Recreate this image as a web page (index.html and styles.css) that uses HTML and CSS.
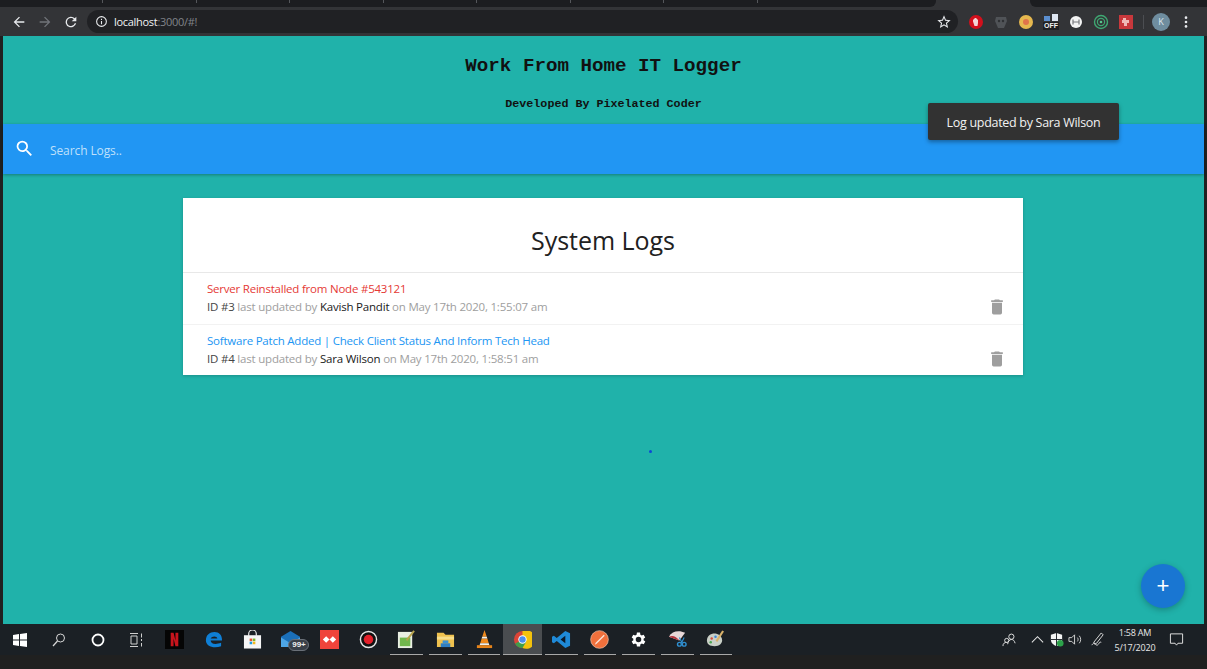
FILE: index.html
```html
<!DOCTYPE html>
<html lang="en">
<head>
<meta charset="utf-8">
<title>Work From Home IT Logger</title>
<link rel="stylesheet" href="styles.css">
</head>
<body>
<div class="browser">
  <div class="tabstrip">
    <div class="tabs-left"><span class="tab-sep"></span><span class="tab-sep"></span><span class="tab-sep"></span><span class="tab-sep"></span><span class="tab-sep"></span><span class="tab-sep"></span><span class="tab-sep"></span><span class="tab-sep"></span></div>
    <div class="tabs-right"></div>
  </div>
  <div class="toolbar">
    <svg class="nav-ic" viewBox="0 0 24 24"><path fill="#e8eaed" d="M20 11H7.800l5.600-5.600L12 4l-8 8 8 8 1.400-1.400L7.800 13H20z"/></svg>
    <svg class="nav-ic" viewBox="0 0 24 24"><path fill="#71747a" d="M4 11h12.200l-5.600-5.600L12 4l8 8-8 8-1.400-1.400 5.600-5.600H4z"/></svg>
    <svg class="nav-ic" viewBox="0 0 24 24"><path fill="#e8eaed" d="M17.650 6.350A8 8 0 1 0 19.730 14h-2.080A6 6 0 1 1 12 6c1.660 0 3.140.69 4.220 1.780L13 11h7V4z"/></svg>
    <div class="omnibox">
      <svg class="info-ic" viewBox="0 0 24 24"><path fill="#e8eaed" d="M11 7h2v2h-2zm0 4h2v6h-2zm1-9a10 10 0 1 0 0 20 10 10 0 0 0 0-20zm0 18a8 8 0 1 1 0-16 8 8 0 0 1 0 16z"/></svg>
      <span class="host">localhost</span><span class="path">:3000/#!</span>
      <svg class="star-ic" viewBox="0 0 24 24"><path fill="#e8eaed" d="M22 9.240l-7.190-.62L12 2 9.190 8.630 2 9.240l5.460 4.730L5.820 21 12 17.270 18.180 21l-1.630-7.030zM12 15.400l-3.760 2.270 1-4.280-3.320-2.880 4.380-.38L12 6.100l1.710 4.040 4.380.38-3.320 2.880 1 4.280z"/></svg>
    </div>
    <div class="exts">
      <svg class="ext" viewBox="0 0 16 16"><circle cx="8" cy="8" r="7" fill="#d3101c"/><path d="M5 7.500V5.500h1V4.500h1v-.5h1v.5h1v1h1v3.500L9.500 12h-3z" fill="#f3d5d5"/></svg>
      <svg class="ext" viewBox="0 0 16 16"><path d="M3 3h10l1 4-3 7H5L2 7z" fill="#505357"/><circle cx="6" cy="7" r="1.200" fill="#2f3134"/><circle cx="10" cy="7" r="1.200" fill="#2f3134"/></svg>
      <svg class="ext" viewBox="0 0 16 16"><circle cx="8" cy="8" r="7" fill="#e6b84f"/><circle cx="8" cy="8" r="3" fill="#e0734a"/></svg>
      <div class="ext-off">
        <svg class="ext-off-ic" viewBox="0 0 16 8"><rect x="1" y="2" width="6" height="5" fill="#5b8fd0"/><rect x="9" y="0" width="6" height="7" fill="#dfe7f2"/></svg>
        <span class="ext-off-label">OFF</span>
      </div>
      <svg class="ext" viewBox="0 0 16 16"><circle cx="8" cy="8" r="6" fill="#f4f4f4"/><path d="M5 5.500v5M11 5.500v5M5 8h6" stroke="#77797d" stroke-width="1.200"/></svg>
      <svg class="ext" viewBox="0 0 16 16"><circle cx="8" cy="8" r="6.500" fill="none" stroke="#3fa772" stroke-width="1.400"/><circle cx="8" cy="8" r="3.600" fill="none" stroke="#3fa772" stroke-width="1.200"/><circle cx="8" cy="8" r="1.300" fill="#57c78d"/></svg>
      <svg class="ext" viewBox="0 0 16 16"><rect x="1" y="1" width="14" height="14" fill="#c8383c"/><path d="M5 4h3v2h3v3H9v3H6V9H4V6h1z" fill="#efb9b6"/></svg>
      <span class="ext-sep"></span>
      <span class="avatar">K</span>
      <svg class="menu-ic" viewBox="0 0 4 16"><circle cx="2" cy="3" r="1.500" fill="#e8eaed"/><circle cx="2" cy="8" r="1.500" fill="#e8eaed"/><circle cx="2" cy="13" r="1.500" fill="#e8eaed"/></svg>
    </div>
  </div>

  <main class="page">
    <header class="app-head">
      <h1 class="app-title">Work From Home IT Logger</h1>
      <p class="app-sub">Developed By Pixelated Coder</p>
    </header>
    <nav class="searchbar">
      <svg class="search-ic" viewBox="0 0 24 24"><path fill="#fff" d="M15.500 14h-.79l-.28-.27A6.470 6.470 0 0 0 16 9.500 6.500 6.500 0 1 0 9.500 16c1.610 0 3.090-.59 4.230-1.570l.27.28v.79l5 4.990L20.490 19zm-6 0C7.010 14 5 11.990 5 9.500S7.010 5 9.500 5 14 7.010 14 9.500 11.990 14 9.500 14z"/></svg>
      <span class="search-text">Search Logs..</span>
    </nav>
    <section class="logs">
      <h2 class="logs-title">System Logs</h2>
      <article class="log">
        <div class="log-body">
          <div class="log-msg red">Server Reinstalled from Node #543121</div>
          <div class="log-meta"><b>ID #3</b> last updated by <i>Kavish Pandit</i> on May 17th 2020, 1:55:07 am</div>
        </div>
        <svg class="trash" viewBox="0 0 24 24"><path fill="#9e9e9e" d="M6 19a2 2 0 0 0 2 2h8a2 2 0 0 0 2-2V7H6zM19 4h-3.500l-1-1h-5l-1 1H5v2h14z"/></svg>
      </article>
      <article class="log">
        <div class="log-body">
          <div class="log-msg blue">Software Patch Added | Check Client Status And Inform Tech Head</div>
          <div class="log-meta"><b>ID #4</b> last updated by <i>Sara Wilson</i> on May 17th 2020, 1:58:51 am</div>
        </div>
        <svg class="trash" viewBox="0 0 24 24"><path fill="#9e9e9e" d="M6 19a2 2 0 0 0 2 2h8a2 2 0 0 0 2-2V7H6zM19 4h-3.500l-1-1h-5l-1 1H5v2h14z"/></svg>
      </article>
    </section>
    <span class="dot"></span>
    <div class="toast">Log updated by Sara Wilson</div>
    <button class="fab" type="button">+</button>
  </main>

  <footer class="taskbar">
    <div class="task-row">
      <div class="task-left">
        <div class="slot"><svg class="sys" viewBox="0 0 16 16"><path fill="#fff" d="M1 3l6-.9V7.600H1zM8 2l7-1v6.600H8zM1 8.400h6v5.500l-6-.9zM8 8.400h7V15l-7-1z"/></svg></div>
        <div class="slot"><svg class="sys" viewBox="0 0 16 16"><circle cx="9.500" cy="6" r="4" fill="none" stroke="#d8d8d8" stroke-width="1"/><path d="M6.500 9L2 14" stroke="#d8d8d8" stroke-width="1.200"/></svg></div>
        <div class="slot"><svg class="sys" viewBox="0 0 16 16"><circle cx="8" cy="8" r="5.500" fill="none" stroke="#fff" stroke-width="1.800"/></svg></div>
        <div class="slot"><svg class="sys" viewBox="0 0 16 16"><path d="M2 1.500h8M2 14.500h8M3 4h6v8H3zM13.500 1.500v4M13.500 7v2M13.500 11v3.500" fill="none" stroke="#cfcfcf" stroke-width="1"/></svg></div>
        <div class="slot"><svg class="app" viewBox="0 0 20 20"><rect width="20" height="20" fill="#050505"/><path d="M6 3h3l2 8V3h3v14h-3L9 9v8H6z" fill="#c8141c"/></svg></div>
        <div class="slot"><svg class="app" viewBox="0 0 20 20"><path d="M2 11C2 5 6 2 11 2c5 0 8 3 8 9H7c0 3 4 5 11 2.500v3.500c-8 3-16 0-16-6zm5-2h7c0-3-6-3-7 0z" fill="#0f7fd6"/></svg></div>
        <div class="slot"><svg class="app" viewBox="0 0 20 20"><path d="M6 6V4a4 4 0 0 1 8 0v2" fill="none" stroke="#e4e4e4" stroke-width="1.300"/><rect x="1" y="5.500" width="18" height="14" fill="#f6f6f6"/><rect x="7" y="9" width="2.700" height="2.700" fill="#e8512d"/><rect x="10.300" y="9" width="2.700" height="2.700" fill="#7db52d"/><rect x="7" y="12.300" width="2.700" height="2.700" fill="#1f9be0"/><rect x="10.300" y="12.300" width="2.700" height="2.700" fill="#f4b81f"/></svg></div>
        <div class="slot slot-badge"><svg class="app" viewBox="0 0 20 20"><path d="M0 7L10 1l10 6v11H0z" fill="#1b6fb8"/><path d="M0 8l10 6 10-6v10H0z" fill="#4ea6e6"/></svg><span class="badge">99+</span></div>
        <div class="slot"><svg class="app" viewBox="0 0 20 20"><rect width="20" height="20" fill="#ef443b"/><path d="M6.500 6.500L10 10l-3.500 3.500L3 10zM13.500 6.500L17 10l-3.500 3.500L10 10z" fill="#fff"/></svg></div>
        <div class="slot"><svg class="app" viewBox="0 0 20 20"><circle cx="10" cy="10" r="8.500" fill="#111" stroke="#e6e6e6" stroke-width="1.500"/><circle cx="10" cy="10" r="5" fill="#e4202a"/></svg></div>
        <div class="slot open"><svg class="app" viewBox="0 0 20 20"><rect x="1" y="2" width="15" height="17" fill="#e9efe3"/><rect x="3" y="8" width="11" height="9" fill="#71b84d"/><path d="M18 1L10 11" stroke="#b8a44c" stroke-width="2"/></svg></div>
        <div class="slot open"><svg class="app" viewBox="0 0 20 20"><path d="M1 3h7l2 2h9v13H1z" fill="#efc14e"/><rect x="1" y="7" width="18" height="3" fill="#f7dd8a"/><rect x="7" y="11" width="6" height="3" fill="#3a92d6"/><rect x="5" y="14" width="10" height="4" fill="#2f7fc3"/></svg></div>
        <div class="slot open"><svg class="app" viewBox="0 0 20 20"><path d="M10 0l2.400 7h-4.800zM7 9h6l1.500 5h-9z" fill="#f08a1c"/><path d="M7.600 7h4.800L13 9H7zM5.500 14h9l.7 2H4.800z" fill="#f4f0e8"/><rect x="2" y="16" width="16" height="3" fill="#e5831a"/></svg></div>
        <div class="slot open active"><svg class="app" viewBox="0 0 20 20"><circle cx="10" cy="10" r="9" fill="#db4437"/><path d="M10 1h7.800A9 9 0 0 1 10 19z" fill="#f4c20d"/><path d="M2.200 14.500A9 9 0 0 0 10 19l4-7-4-2z" fill="#3f9e4a"/><circle cx="10" cy="10" r="4.400" fill="#fff"/><circle cx="10" cy="10" r="3.400" fill="#4b8df0"/></svg></div>
        <div class="slot open"><svg class="app" viewBox="0 0 20 20"><path d="M14 1l5 2.500v13L14 19 5 11.500 2 14 0 13V7l2-1 3 2.500z" fill="#1f8ad8"/><path d="M14 6L9 10l5 4z" fill="#0b1a2a"/></svg></div>
        <div class="slot open"><svg class="app" viewBox="0 0 20 20"><circle cx="10" cy="10" r="9.300" fill="#f0703c" stroke="#f6c7ae" stroke-width=".7"/><path d="M14.500 5L6 13.500l-1 2 2-1L15.500 6z" fill="#fbe4d8"/></svg></div>
        <div class="slot open"><svg class="app" viewBox="0 0 24 24"><path fill="#fff" d="M19.400 13a7.500 7.500 0 0 0 0-2l2.100-1.600-2-3.500-2.500 1a7.500 7.500 0 0 0-1.700-1L15 3.200h-4l-.4 2.700a7.500 7.500 0 0 0-1.700 1l-2.500-1-2 3.500L6.500 11a7.500 7.500 0 0 0 0 2l-2.100 1.600 2 3.500 2.500-1c.5.4 1.100.7 1.700 1l.4 2.700h4l.4-2.700c.6-.3 1.200-.6 1.700-1l2.500 1 2-3.500zM13 15.500a3.500 3.500 0 1 1 0-7 3.500 3.500 0 0 1 0 7z" transform="translate(-1)"/></svg></div>
        <div class="slot open"><svg class="app" viewBox="0 0 20 20"><path d="M1 7C4 1 12 0 18 3l-6 8z" fill="#e8d8d8"/><path d="M1 7c4-2 8 0 11 4z" fill="#b5343c"/><circle cx="12" cy="15" r="2" fill="none" stroke="#2f8fd0" stroke-width="1.500"/><circle cx="17" cy="15" r="2" fill="none" stroke="#2f8fd0" stroke-width="1.500"/><path d="M12 8l3 6M17 8l-3 6" stroke="#2f8fd0" stroke-width="1.200"/></svg></div>
        <div class="slot open"><svg class="app" viewBox="0 0 20 20"><path d="M1 11c0-5 5-8 10-7 4 1 6 4 6 7s-3 6-8 6-8-2-8-6z" fill="#c9cfc6"/><circle cx="6" cy="9" r="1.300" fill="#d64a3a"/><circle cx="10" cy="7" r="1.300" fill="#3a86d6"/><circle cx="5" cy="13" r="1.300" fill="#4aa552"/><path d="M18 1l-7 11" stroke="#d9b26a" stroke-width="2.200"/></svg></div>
      </div>
      <div class="task-right">
        <svg class="tray people" viewBox="0 0 16 16"><circle cx="10" cy="5" r="2.800" fill="none" stroke="#e6e6e6"/><circle cx="5" cy="9" r="2.200" fill="none" stroke="#e6e6e6"/><path d="M1 15c0-3 2-4 4-4M6 13c.5-3 2-5 4-5s3 1 4 4" fill="none" stroke="#e6e6e6"/></svg>
        <svg class="tray chevron" viewBox="0 0 16 16"><path d="M2 11l6-6 6 6" fill="none" stroke="#e6e6e6" stroke-width="1.100"/></svg>
        <svg class="tray shield" viewBox="0 0 16 16"><path d="M8 1l6 2v5c0 4-3 6-6 7-3-1-6-3-6-7V3z" fill="#f4f4f4"/><path d="M8 1v14M2 8h12" stroke="#1c2126"/><circle cx="12" cy="12" r="3.500" fill="#2ca24a"/></svg>
        <svg class="tray volume" viewBox="0 0 16 16"><path d="M1 6h3l3-3v10l-3-3H1z" fill="none" stroke="#d8d8d8"/><path d="M10 6c1 1 1 3 0 4M12 4c2 2 2 6 0 8" fill="none" stroke="#d8d8d8"/></svg>
        <svg class="tray pen" viewBox="0 0 16 16"><path d="M12 1L4 11l1 2 2-1 7-9zM2 14c1-2 3-3 4-1s2 1 3 0 1-3 3-2" fill="none" stroke="#e0e0e0"/></svg>
        <div class="clock"><span>1:58 AM</span><span>5/17/2020</span></div>
        <svg class="tray notif" viewBox="0 0 16 16"><path d="M1.500 2h13v10H9.500L8 14l-1.500-2h-5z" fill="none" stroke="#e6e6e6"/></svg>
      </div>
    </div>
  </footer>
</div>
</body>
</html>
```
FILE: styles.css
```css
* { box-sizing: border-box; }
html, body { margin: 0; height: 100%; }
body { background: #202020; overflow: hidden; font-family: "Open Sans", "Noto Sans", sans-serif; }
.browser { width: 1207px; height: 669px; display: flex; flex-direction: column; }

.tabstrip { height: 7px; background: #333437; display: flex; justify-content: space-between; }
.tabs-left { width: 936px; background: #1c1d20; border-bottom-right-radius: 6px; display: flex; padding-left: 102px; gap: 92.500px; }
.tabs-right { width: 177px; background: #1c1d20; border-bottom-left-radius: 6px; }
.tab-sep { width: 1px; height: 3px; background: #55575b; }

.toolbar { height: 29px; background: #333437; display: flex; align-items: center; padding-left: 11px; }
.nav-ic { width: 16px; height: 16px; margin-right: 10px; flex: none; }
.omnibox { width: 871px; height: 23px; margin-left: -2px; background: #202124; border-radius: 12px; display: flex; align-items: center; padding: 0 6px 0 8px; color: #e8eaed; font-size: 11px; letter-spacing: -.3px; }
.info-ic { width: 13px; height: 13px; margin-right: 6px; }
.host { color: #f1f3f4; }
.path { color: #80848a; }
.star-ic { width: 16px; height: 16px; margin-left: auto; }
.exts { flex: 1; display: flex; align-items: center; padding-left: 10px; }
.ext { width: 16px; height: 16px; margin-right: 9px; flex: none; }
.ext-off { width: 16px; margin-right: 9px; display: flex; flex-direction: column; align-items: center; }
.ext-off-ic { width: 16px; height: 8px; }
.ext-off-label { font-family: "Liberation Sans", sans-serif; font-size: 7px; line-height: 8px; font-weight: 700; color: #f1f1f1; background: #202124; padding: 0 1px; }
.ext-sep { width: 1px; height: 14px; background: #4c4e52; margin-right: 8px; }
.avatar { width: 18px; height: 18px; border-radius: 50%; background: #6f8d9f; color: #dfe8ee; font-size: 9px; display: flex; align-items: center; justify-content: center; margin-right: 14px; }
.menu-ic { width: 4px; height: 14px; }

.page { position: relative; flex: 0 0 588px; margin: 0 3px; background: #20b2aa; display: flex; flex-direction: column; align-items: center; }
.app-head { align-self: stretch; height: 88px; padding-top: 20px; text-align: center; font-family: "Liberation Mono", "Courier New", monospace; font-weight: 700; color: #111; }
.app-title { margin: 0; font-size: 19.200px; line-height: 20px; font-weight: 700; }
.app-sub { margin: 20px 0 0; font-size: 11.700px; line-height: 16px; }
.searchbar { align-self: stretch; height: 50px; background: #2196f3; display: flex; align-items: center; padding-left: 11px; box-shadow: 0 1px 3px rgba(0, 0, 0, .3); }
.search-ic { width: 21px; height: 21px; margin-top: -2px; }
.search-text { margin: 2px 0 0 15px; color: #bfe0fb; font-size: 12px; letter-spacing: -.1px; }

.logs { width: 840px; margin: 24px 1px 0 0; background: #fff; box-shadow: 0 1px 3px rgba(0, 0, 0, .2); }
.logs-title { margin: 0; height: 75px; padding-top: 24px; text-align: center; font-size: 25px; line-height: 36px; font-weight: 400; color: #212121; border-bottom: 1px solid #e8e8e8; letter-spacing: -.05px; }
.log { height: 52px; padding: 7px 16px 0 24px; display: flex; justify-content: space-between; border-bottom: 1px solid #f2f2f2; }
.log:last-child { height: 50px; border-bottom: 0; }
.log-msg { font-size: 11.500px; line-height: 18px; letter-spacing: -.22px; }
.log-msg.red { color: #e53935; }
.log-msg.blue { color: #2196f3; }
.log-meta { font-size: 11.500px; line-height: 18px; color: #9e9e9e; letter-spacing: -.2px; }
.log-meta b { font-weight: 400; color: #444; }
.log-meta i { font-style: normal; color: #1a1a1a; }
.trash { width: 20px; height: 20px; margin-top: 17px; }

.dot { position: absolute; left: 646px; top: 414px; width: 3px; height: 3px; border-radius: 50%; background: #0d47d8; }
.toast { position: absolute; left: 925px; top: 67px; width: 191px; height: 37px; padding-top: 2px; background: #323232; color: #f2f2f2; border-radius: 2px; font-size: 12.500px; letter-spacing: -.3px; display: flex; align-items: center; justify-content: center; box-shadow: 0 2px 4px rgba(0, 0, 0, .35); }
.fab { position: absolute; left: 1138px; top: 528px; width: 44px; height: 44px; border: 0; padding: 0; border-radius: 50%; background: #1976d2; color: #fff; font: 400 22px/44px "Liberation Sans", sans-serif; box-shadow: 0 2px 6px rgba(0, 0, 0, .25); }

.taskbar { flex: 1; background: #202020; }
.task-row { height: 31px; background: #1b2025; display: flex; justify-content: space-between; padding-right: 3px; }
.task-left { display: flex; padding-left: 1px; }
.slot { position: relative; width: 38.650px; height: 31px; display: flex; align-items: center; justify-content: center; }
.slot.open::after { content: ""; position: absolute; left: 3px; right: 3px; bottom: 0; height: 1px; background: #a8a8a8; }
.slot.active { background: #4a4d50; }
.slot.active::after { left: 0; right: 0; }
.sys { width: 16px; height: 16px; }
.app { width: 19px; height: 19px; }
.badge { position: absolute; left: 17px; top: 15px; width: 21px; height: 12px; border-radius: 6px; background: #3a4048; border: 1px solid #6a7078; color: #f0f0f0; font: 700 8px/10px "Liberation Sans", sans-serif; text-align: center; }
.task-right { display: flex; align-items: center; }
.tray { width: 15px; height: 15px; flex: none; }
.people { margin-right: 13px; }
.chevron { margin-right: 4px; }
.shield { margin-right: 4px; }
.volume { margin-right: 7px; }
.pen { margin-right: 4px; }
.clock { width: 52px; display: flex; flex-direction: column; align-items: center; color: #e8e8e8; font-size: 9px; line-height: 15px; letter-spacing: -.2px; margin-right: 8px; }
.notif { width: 15px; height: 15px; margin-right: 20px; }
```
